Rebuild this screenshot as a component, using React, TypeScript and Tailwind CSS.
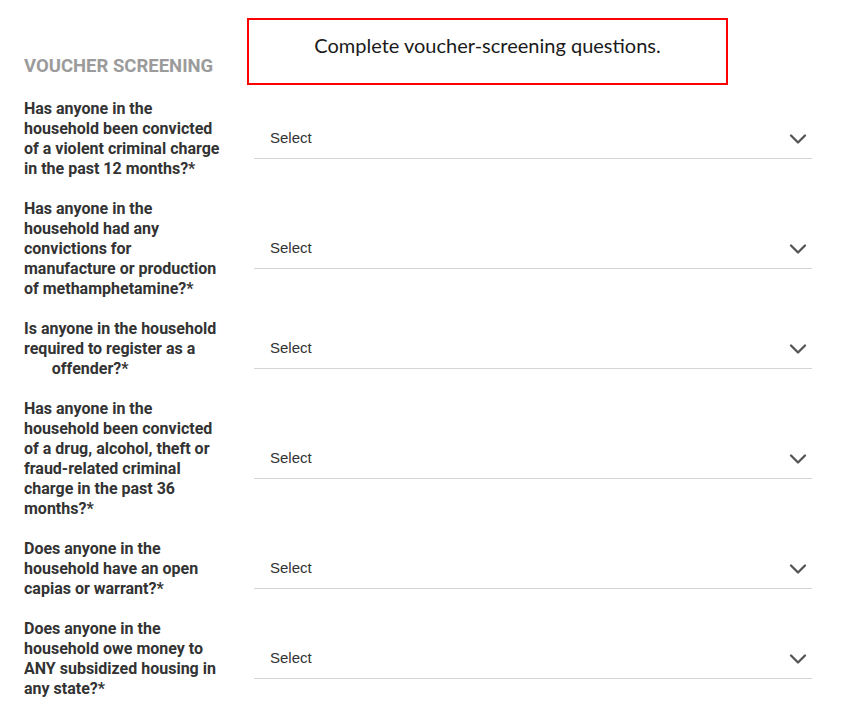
import { ChevronDown } from 'lucide-react';

const questions: string[][] = [
  ['Has anyone in the', 'household been convicted', 'of a violent criminal charge', 'in the past 12 months?*'],
  ['Has anyone in the', 'household had any', 'convictions for', 'manufacture or production', 'of methamphetamine?*'],
  ['Is anyone in the household', 'required to register as a', '\u00a0\u00a0\u00a0\u00a0\u00a0\u00a0\u00a0offender?*'],
  [
    'Has anyone in the',
    'household been convicted',
    'of a drug, alcohol, theft or',
    'fraud-related criminal',
    'charge in the past 36',
    'months?*',
  ],
  ['Does anyone in the', 'household have an open', 'capias or warrant?*'],
  ['Does anyone in the', 'household owe money to', 'ANY subsidized housing in', 'any state?*'],
];

const App = () => {
  return (
    <div className="min-h-[708px] bg-white pl-6 pt-[18px] font-['Roboto',sans-serif]">
      <div className="flex">
        <div className="w-[223px] pt-[38px]">
          <h2 className="text-[18.5px] leading-5 font-bold text-[#9b9b9b] whitespace-nowrap">VOUCHER SCREENING</h2>
        </div>
        <div className="w-[481px] h-[67px] border-2 border-[#ff0000] pt-[13px] text-center">
          <p className="font-['Lato',sans-serif] text-[20px] leading-6 text-[#1a1a1a]">
            Complete voucher-screening questions.
          </p>
        </div>
      </div>

      <div className="mt-[14px] flex flex-col gap-5">
        {questions.map((lines, i) => (
          <div key={i} className="flex items-center">
            <div className="w-[230px] text-[16px] leading-5 font-bold text-[#333333]">
              {lines.map((line, idx) => (
                <div key={idx} className="whitespace-pre">
                  {line}
                </div>
              ))}
            </div>
            <div className="w-[558px] h-10 flex items-center justify-between border-b border-[#d4d4d8] pl-4">
              <span className="font-['Liberation_Sans',sans-serif] text-[15px] text-[#333333]">Select</span>
              <ChevronDown size={28} strokeWidth={2} className="text-[#555555]" />
            </div>
          </div>
        ))}
      </div>
    </div>
  );
};

export default App;
